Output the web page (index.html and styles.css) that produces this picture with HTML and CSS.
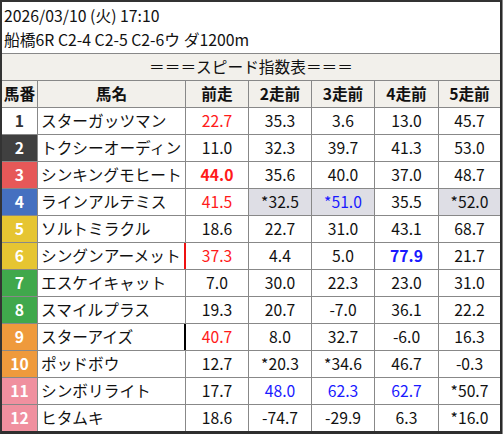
FILE: index.html
```html
<!DOCTYPE html>
<html lang="ja">
<head>
<meta charset="utf-8">
<link rel="stylesheet" href="styles.css">
</head>
<body>
<div class="frame">
  <div class="info">
    <div class="line">2026/03/10 (火) 17:10</div>
    <div class="line">船橋6R C2-4 C2-5 C2-6ウ ダ1200m</div>
  </div>
  <div class="grid">
    <div class="title">＝＝＝スピード指数表＝＝＝</div>
    <div class="hd">馬番</div><div class="hd">馬名</div><div class="hd">前走</div><div class="hd">2走前</div><div class="hd">3走前</div><div class="hd">4走前</div><div class="hd">5走前</div>

    <div class="num w1">1</div><div class="name">スターガッツマン</div><div class="v red">22.7</div><div class="v">35.3</div><div class="v">3.6</div><div class="v">13.0</div><div class="v">45.7</div>
    <div class="num w2">2</div><div class="name">トクシーオーディン</div><div class="v">11.0</div><div class="v">32.3</div><div class="v">39.7</div><div class="v">41.3</div><div class="v">53.0</div>
    <div class="num w3">3</div><div class="name">シンキングモヒート</div><div class="v red b">44.0</div><div class="v">35.6</div><div class="v">40.0</div><div class="v">37.0</div><div class="v">48.7</div>
    <div class="num w4">4</div><div class="name">ラインアルテミス</div><div class="v red">41.5</div><div class="v gray">*32.5</div><div class="v gray blue">*51.0</div><div class="v">35.5</div><div class="v gray">*52.0</div>
    <div class="num w5">5</div><div class="name">ソルトミラクル</div><div class="v">18.6</div><div class="v">22.7</div><div class="v">31.0</div><div class="v">43.1</div><div class="v">68.7</div>
    <div class="num w5">6</div><div class="name">シングンアーメット</div><div class="v red mark-red">37.3</div><div class="v">4.4</div><div class="v">5.0</div><div class="v blue b">77.9</div><div class="v">21.7</div>
    <div class="num w7">7</div><div class="name">エスケイキャット</div><div class="v">7.0</div><div class="v">30.0</div><div class="v">22.3</div><div class="v">23.0</div><div class="v">31.0</div>
    <div class="num w7">8</div><div class="name">スマイルプラス</div><div class="v">19.3</div><div class="v">20.7</div><div class="v">-7.0</div><div class="v">36.1</div><div class="v">22.2</div>
    <div class="num w9">9</div><div class="name">スターアイズ</div><div class="v red mark-black">40.7</div><div class="v">8.0</div><div class="v">32.7</div><div class="v">-6.0</div><div class="v">16.3</div>
    <div class="num w9">10</div><div class="name">ポッドボウ</div><div class="v">12.7</div><div class="v">*20.3</div><div class="v">*34.6</div><div class="v">46.7</div><div class="v">-0.3</div>
    <div class="num w11">11</div><div class="name">シンボリライト</div><div class="v">17.7</div><div class="v blue">48.0</div><div class="v blue">62.3</div><div class="v blue">62.7</div><div class="v">*50.7</div>
    <div class="num w11">12</div><div class="name">ヒタムキ</div><div class="v">18.6</div><div class="v">-74.7</div><div class="v">-29.9</div><div class="v">6.3</div><div class="v">*16.0</div>
  </div>
</div>
</body>
</html>
```
FILE: styles.css
```css
html, body {
  margin: 0;
  padding: 0;
  background: #8a8a8a;
}
body {
  width: 503px;
  height: 434px;
  overflow: hidden;
  font-family: "Noto Sans CJK JP", "Noto Sans", sans-serif;
  color: #111;
}
.frame {
  width: 498px;
  height: 429px;
  border-top: 2px solid #333;
  border-left: 2px solid #333;
  border-right: 2px solid #2a2a2a;
  border-bottom: 3px solid #2f2f2f;
  background: #fff;
  overflow: hidden;
}
.info {
  height: 51px;
  box-sizing: border-box;
  padding: 2px 0 0 2px;
  font-size: 15.8px;
  line-height: 24px;
  background: #fff;
}
.line {
  white-space: nowrap;
}
.grid {
  display: grid;
  grid-template-columns: 35px 147px 62px 62px 62px 63px 61px;
  grid-auto-rows: 26px;
  gap: 1px;
  padding-top: 1px;
  background: #888;
  font-size: 15.7px;
  line-height: 26px;
}
.grid > div {
  background: #fff;
  white-space: nowrap;
  overflow: visible;
}
.grid > .title {
  grid-column: 1 / -1;
  text-align: center;
  background: #f2f0eb;
}
.grid > .hd {
  background: #f2f0eb;
  font-weight: bold;
  text-align: center;
}
.num {
  text-align: center;
  font-weight: bold;
  color: #fff;
}
.grid > .w1 { background: #fff; color: #333; }
.grid > .w2 { background: #404040; }
.grid > .w3 { background: #e65858; }
.grid > .w4 { background: #4570c0; }
.grid > .w5 { background: #e6c532; }
.grid > .w7 { background: #40a84c; }
.grid > .w9 { background: #ef9a3c; }
.grid > .w11 { background: #f0909f; }
.name {
  padding-left: 3px;
}
.v {
  text-align: center;
}
.red { color: #ff1a1a; }
.blue { color: #1a1aff; }
.b { font-weight: bold; }
.grid > .gray { background: #dedee5; }
.mark-red { box-shadow: -2px 0 0 #ee1111; }
.mark-black { box-shadow: -2px 0 0 #000; }
```
